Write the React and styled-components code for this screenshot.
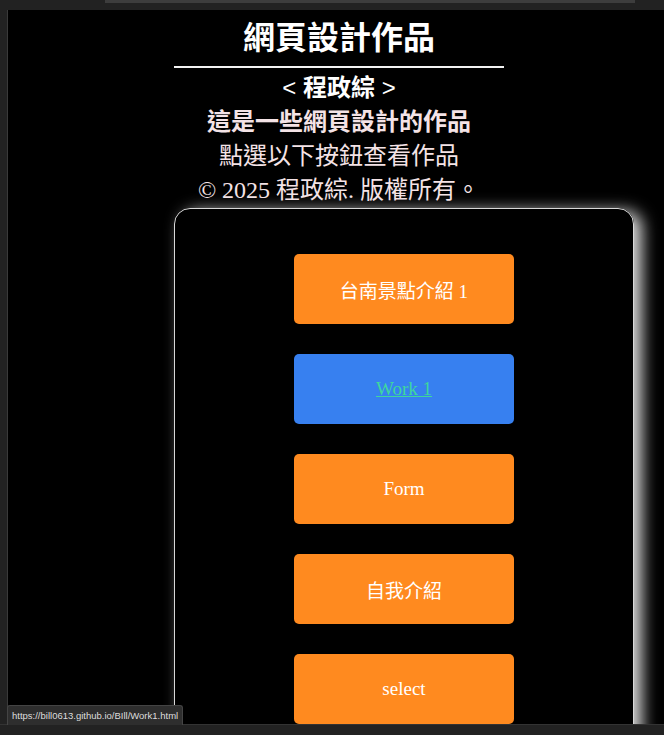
import React from "react";
import styled, { createGlobalStyle } from "styled-components";

const works = [
  { label: "台南景點介紹 1" },
  { label: "Work 1", active: true },
  { label: "Form" },
  { label: "自我介紹" },
  { label: "select" },
];

const App = () => {
  return (
    <>
      <GlobalStyle />
      <Shell>
        <TopBar>
          <TopTrack />
        </TopBar>
        <Middle>
          <LeftStrip />
          <Viewport>
            <Header>
              <Title>網頁設計作品</Title>
              <Rule />
              <Line $sans>
                &lt; <Name>程政綜</Name> &gt;
              </Line>
              <Line $bold $tint>這是一些網頁設計的作品</Line>
              <Line $tint>點選以下按鈕查看作品</Line>
              <Line $tint>© 2025 程政綜. 版權所有。</Line>
            </Header>
            <Card>
              {works.map((w) => (
                <WorkButton key={w.label} $active={w.active}>
                  {w.active ? <WorkLink href="#">{w.label}</WorkLink> : w.label}
                </WorkButton>
              ))}
            </Card>
          </Viewport>
        </Middle>
        <BottomBar />
        <StatusTip>https://bill0613.github.io/BIll/Work1.html</StatusTip>
      </Shell>
    </>
  );
};

const GlobalStyle = createGlobalStyle`
  html, body {
    margin: 0;
    background: #000;
    overflow: hidden;
  }
`;

const Shell = styled.div`
  position: relative;
  height: 735px;
  display: flex;
  flex-direction: column;
  background: #000;
`;

const TopBar = styled.div`
  height: 10px;
  flex: none;
  background: #222;
  padding-left: 105px;
  padding-right: 29px;
`;

const TopTrack = styled.div`
  height: 3px;
  background: #3d3d3d;
`;

const Middle = styled.div`
  flex: 1;
  display: flex;
  min-height: 0;
`;

const LeftStrip = styled.div`
  width: 7px;
  flex: none;
  background: #222;
  border-right: 1px solid #3a3a3a;
`;

const Viewport = styled.main`
  flex: 1;
  overflow: hidden;
  background: #000;
  padding-left: 166px;
`;

const Header = styled.header`
  width: 330px;
  text-align: center;
  font-family: "Liberation Serif", "Noto Sans CJK TC", serif;
`;

const Title = styled.h1`
  margin: 8px 0 0;
  font-size: 32px;
  line-height: 40px;
  font-weight: 700;
  color: #fff;
`;

const Rule = styled.hr`
  margin: 8px 0 0;
  border: none;
  border-top: 2px solid #f2f2f2;
`;

const Line = styled.p`
  margin: 0;
  font-family: ${(p) =>
    p.$sans ? '"Liberation Sans", "Noto Sans CJK TC", sans-serif' : "inherit"};
  font-size: 24px;
  line-height: 34px;
  font-weight: ${(p) => (p.$bold ? 700 : 400)};
  color: ${(p) => (p.$tint ? "#f4e3e6" : "#fff")};
  white-space: nowrap;
  &:first-of-type {
    margin-top: 3px;
  }
`;

const Name = styled.strong`
  font-weight: 700;
`;

const Card = styled.section`
  margin-top: 1px;
  width: 460px;
  height: 600px;
  box-sizing: border-box;
  border: 1px solid #d8d8d8;
  border-radius: 16px;
  padding-top: 45px;
  display: flex;
  flex-direction: column;
  align-items: center;
  gap: 30px;
  box-shadow: 8px 3px 16px rgba(255, 255, 255, 0.85);
`;

const WorkButton = styled.div`
  width: 220px;
  height: 70px;
  flex: none;
  border-radius: 5px;
  background: ${(p) => (p.$active ? "#3780f0" : "#ff8a1f")};
  display: flex;
  align-items: center;
  justify-content: center;
  color: #fff;
  font-family: "Liberation Serif", "Noto Sans CJK TC", serif;
  font-size: 19px;
`;

const WorkLink = styled.a`
  color: #3ed69e;
  text-decoration: underline;
`;

const BottomBar = styled.div`
  height: 10px;
  flex: none;
  background: #222;
  border-top: 1px solid #333;
`;

const StatusTip = styled.div`
  position: absolute;
  left: 7px;
  bottom: 10px;
  height: 19px;
  padding: 0 4px;
  display: flex;
  align-items: center;
  background: #2e2e2e;
  border: 1px solid #444;
  border-bottom: none;
  border-radius: 3px 3px 0 0;
  color: #ddd;
  font-family: "Liberation Sans", Arial, sans-serif;
  font-size: 9.5px;
`;

export default App;
